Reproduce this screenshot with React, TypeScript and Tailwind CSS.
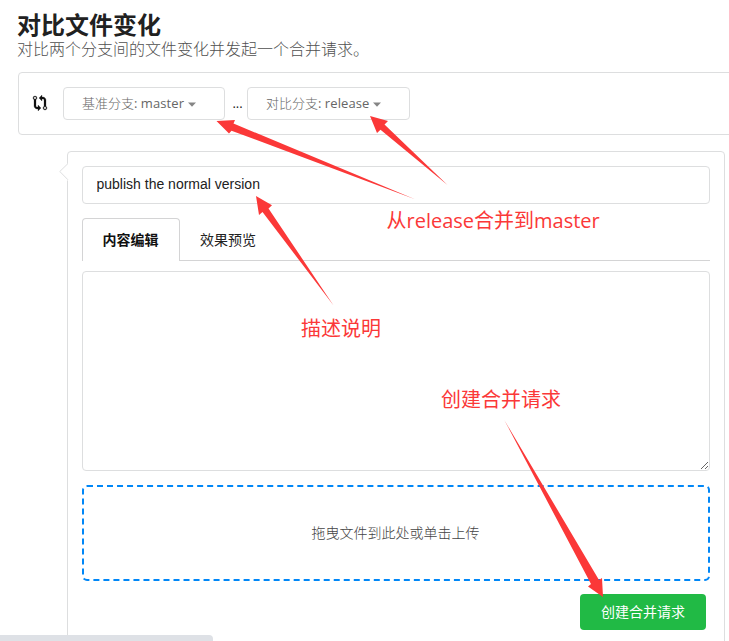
import React from "react";

function Caret() {
  return (
    <svg width="8" height="5" viewBox="0 0 8 5" className="ml-[4px] mt-px shrink-0">
      <path d="M0 0.5h8L4 4.7z" fill="#858585" />
    </svg>
  );
}

function BranchSelect({ label, branch, width }: { label: string; branch: string; width: string }) {
  return (
    <button
      className={`flex h-[33px] items-center rounded border border-[#dddedf] bg-white pl-[18px] pt-px text-[13px] whitespace-nowrap text-[#666] ${width}`}
    >
      <span className="font-light">{label}</span>
      <span>:&nbsp;</span>
      <span className="tracking-[0.1px]">{branch}</span>
      <Caret />
    </button>
  );
}

function CompareIcon() {
  return (
    <svg width="14" height="16" viewBox="0 0 14 16" fill="#111" stroke="#111" strokeWidth="0.25" className="mb-px overflow-visible">
      <path
        fillRule="evenodd"
        d="M5 12H4c-.27-.02-.48-.11-.69-.31-.21-.2-.3-.42-.31-.69V4.72A1.993 1.993 0 0 0 2 1a1.993 1.993 0 0 0-1 3.72V11c.03.78.34 1.47.94 2.06.6.59 1.28.91 2.06.94h1v2l3-3-3-3v2zM2 1.8c.66 0 1.2.55 1.2 1.2 0 .65-.55 1.2-1.2 1.2C1.35 4.2.8 3.65.8 3c0-.65.55-1.2 1.2-1.2zm11 9.48V5c-.03-.78-.34-1.47-.94-2.06-.6-.59-1.28-.91-2.06-.94H9V0L6 3l3 3V4h1c.27.02.48.11.69.31.21.2.3.42.31.69v6.28A1.993 1.993 0 0 0 12 15a1.993 1.993 0 0 0 1-3.72zm-1 2.92c-.66 0-1.2-.55-1.2-1.2 0-.65.55-1.2 1.2-1.2.65 0 1.2.55 1.2 1.2 0 .65-.55 1.2-1.2 1.2z"
      />
    </svg>
  );
}

function Annotations() {
  const note =
    "absolute whitespace-nowrap text-[20px] leading-[28px] text-[#fb3838]";
  return (
    <div className="pointer-events-none absolute inset-0">
      <svg width="729" height="641" viewBox="0 0 729 641" fill="#fb3838" className="absolute inset-0">
        <path d="M216.5 121 235 120 233.5 123.5 415 199.2 231.5 130.7 229 133.5z" />
        <path d="M370 116 388 121 384.5 124.5 447.5 185 380.5 129.7 377 133z" />
        <path d="M256 196 272 205.2 268.5 208.5 333.4 305.2 262.5 212 259 215z" />
        <path d="M504.3 420 599 580 602 578 603 597 588 586.5 591 584z" />
      </svg>
      <div className={`${note} left-[386.5px] top-[207px]`}>
        从<span>release</span>合并到<span>master</span>
      </div>
      <div className={`${note} left-[301px] top-[315px]`}>描述说明</div>
      <div className={`${note} left-[441px] top-[386px]`}>创建合并请求</div>
    </div>
  );
}

export default function App() {
  return (
    <div className="relative h-[641px] w-[729px] overflow-hidden bg-white font-['Open_Sans','Noto_Sans_CJK_SC',sans-serif]">
      <header className="h-[72px] pl-[17px] pt-[9px]">
        <h1 className="text-[24px] leading-[31px] font-bold text-[#212121]">对比文件变化</h1>
        <p className="text-[16px] leading-[18px] font-light text-[#505050]">
          对比两个分支间的文件变化并发起一个合并请求。
        </p>
      </header>

      <div className="ml-[18px] flex h-[63px] w-[760px] items-center rounded border border-[#dddedf] pl-[14px]">
        <CompareIcon />
        <div className="ml-[16px] flex items-center">
          <BranchSelect label="基准分支" branch="master" width="w-[162px]" />
          <span className="w-[22px] pl-[3px] text-center text-[13px] text-[#222]">...</span>
          <BranchSelect label="对比分支" branch="release" width="w-[163px]" />
        </div>
      </div>

      <main className="relative mt-[16px] ml-[67px] h-[520px] w-[658px] rounded border border-[#dddedf] px-[14px] pt-[14px]">
        <svg width="10" height="18" viewBox="0 0 10 18" className="absolute top-[11px] left-[-9px]">
          <path d="M9 0v18L.7 9z" fill="#fff" />
          <path d="M9 .5.8 8.5 9 16.8" fill="none" stroke="#dddedf" />
        </svg>

        <input
          readOnly
          value="publish the normal version"
          className="block h-[38px] w-full rounded border border-[#dddedf] px-[13.5px] pb-[2px] font-['Liberation_Sans',sans-serif] text-[14px] text-[#212121] outline-none"
        />

        <div className="mt-[14px] flex h-[43px] text-[14px]">
          <div className="flex w-[98px] items-center justify-center rounded-t border border-b-0 border-[#d4d4d5] pr-px pb-[2px] font-bold text-[#111]">
            内容编辑
          </div>
          <div className="flex grow items-center border-b border-[#d4d4d5] pl-[20px] text-[#222]">
            效果预览
          </div>
        </div>

        <textarea
          readOnly
          className="mt-[10px] block h-[200px] w-full resize-y rounded border border-[#dddedf] outline-none"
        />

        <div className="mt-[14px] flex h-[96px] items-center justify-center rounded-[5px] border-2 border-dashed border-[#0087f7] pr-px pb-[2px] text-[14px] font-light text-[#444]">
          拖曳文件到此处或单击上传
        </div>

        <div className="mt-[13px] flex justify-end pr-[4px]">
          <button className="h-[36px] w-[126px] rounded bg-[#21ba45] pb-[2px] text-[14px] text-white">
            创建合并请求
          </button>
        </div>
      </main>

      <Annotations />
      <div className="absolute bottom-0 left-0 h-[6px] w-[213px] rounded-tr-[4px] bg-[#dee1e6]" />
    </div>
  );
}
